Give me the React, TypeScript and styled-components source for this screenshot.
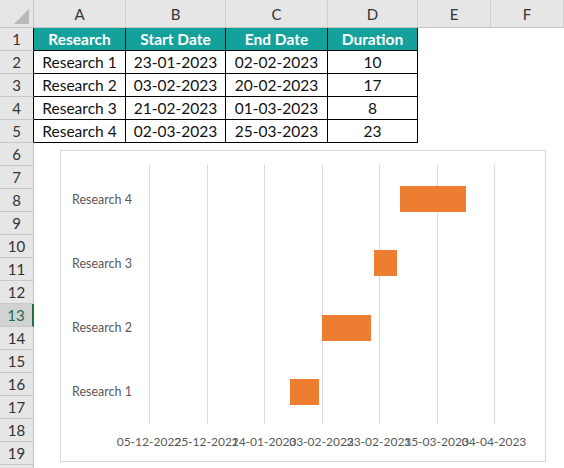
import styled, { createGlobalStyle } from "styled-components";

const GlobalStyle = createGlobalStyle`
  html, body {
    margin: 0;
    padding: 0;
    background: #ffffff;
  }
  body {
    font-family: Lato, "Liberation Sans", sans-serif;
    overflow: hidden;
  }
  * {
    box-sizing: border-box;
  }
`;

const COLUMNS = [
  { name: "A", width: 92 },
  { name: "B", width: 100 },
  { name: "C", width: 102 },
  { name: "D", width: 90 },
  { name: "E", width: 73 },
  { name: "F", width: 73 },
];

const HEADERS = ["Research", "Start Date", "End Date", "Duration"];

const TASKS = [
  { name: "Research 1", start: "23-01-2023", end: "02-02-2023", duration: 10 },
  { name: "Research 2", start: "03-02-2023", end: "20-02-2023", duration: 17 },
  { name: "Research 3", start: "21-02-2023", end: "01-03-2023", duration: 8 },
  { name: "Research 4", start: "02-03-2023", end: "25-03-2023", duration: 23 },
];

const ROW_COUNT = 20;
const SELECTED_ROW = 13;
const TABLE_ROWS = 5;

// chart scale
const AXIS_START = "05-12-2022";
const TICK_DAYS = 20;
const TICK_COUNT = 7;
const TICK_WIDTH = 57.5;
const PX_PER_DAY = TICK_WIDTH / TICK_DAYS;
const PLOT_HEIGHT = 259;
const BAND_TOP = 2;
const BAR_HEIGHT = 26;
const DAY_MS = 86400000;

const parseDate = (s: string) => {
  const [d, m, y] = s.split("-").map(Number);
  return Date.UTC(y, m - 1, d);
};

const formatDate = (t: number) => {
  const date = new Date(t);
  const dd = String(date.getUTCDate()).padStart(2, "0");
  const mm = String(date.getUTCMonth() + 1).padStart(2, "0");
  return `${dd}-${mm}-${date.getUTCFullYear()}`;
};

const Sheet = styled.div`
  width: 564px;
  height: 468px;
  overflow: hidden;
  background: #ffffff;
`;

const ColumnBar = styled.div`
  display: flex;
  height: 28px;
  background: #e6e6e6;
  border-bottom: 1px solid #c4c4c4;
`;

const Corner = styled.div`
  width: 34px;
  flex: none;
  display: flex;
  align-items: flex-end;
  justify-content: flex-end;
  padding: 0 4px 3px 0;
  border-right: 1px solid #c4c4c4;
`;

const CornerMark = styled.div`
  width: 15px;
  height: 15px;
  background: #b8b8b8;
  clip-path: polygon(100% 0, 100% 100%, 0 100%);
`;

const ColHead = styled.div<{ $w: number }>`
  width: ${(p) => p.$w}px;
  flex: none;
  display: flex;
  align-items: center;
  justify-content: center;
  font-size: 15px;
  color: #333333;
  border-right: 1px solid #d0d0d0;
`;

const Body = styled.div`
  display: flex;
`;

const RowHeads = styled.div`
  width: 34px;
  flex: none;
  display: flex;
  flex-direction: column;
`;

const RowHead = styled.div<{ $selected?: boolean; $edge: string }>`
  height: 23px;
  flex: none;
  display: flex;
  align-items: center;
  justify-content: center;
  font-size: 15px;
  color: ${(p) => (p.$selected ? "#1f6e43" : "#333333")};
  background: ${(p) => (p.$selected ? "#d2d2d2" : "#e6e6e6")};
  border-bottom: 1px solid #c8c8c8;
  border-right: ${(p) => (p.$selected ? "2px solid #217346" : `1px solid ${p.$edge}`)};
`;

const Cells = styled.div`
  flex: 1;
  display: flex;
  flex-direction: column;
`;

const Table = styled.div`
  display: grid;
  grid-template-columns: 92px 100px 102px 90px;
  grid-auto-rows: 23px;
`;

const Cell = styled.div<{ $head?: boolean }>`
  display: flex;
  align-items: center;
  justify-content: center;
  font-size: 15.5px;
  font-weight: ${(p) => (p.$head ? 700 : 400)};
  color: ${(p) => (p.$head ? "#ffffff" : "#111111")};
  background: ${(p) => (p.$head ? "#14a19b" : "#ffffff")};
  border-right: 1px solid #000000;
  border-bottom: 1px solid #000000;
  white-space: nowrap;
`;

const Chart = styled.div`
  width: 486px;
  height: 312px;
  margin: 7px 0 0 26px;
  border: 1px solid #d9d9d9;
  background: #ffffff;
  padding-top: 14px;
  display: flex;
  flex-direction: column;
`;

const PlotRow = styled.div`
  display: flex;
`;

const Categories = styled.div`
  width: 88px;
  flex: none;
  display: grid;
  grid-template-rows: repeat(4, 1fr);
  height: ${PLOT_HEIGHT}px;
  padding-top: ${BAND_TOP}px;
`;

const Category = styled.div`
  display: flex;
  align-items: center;
  padding-left: 11px;
  font-size: 12.5px;
  color: #595959;
  white-space: nowrap;
`;

const Axis = styled.div`
  display: flex;
  padding: 10px 0 0 59.25px;
`;

const Tick = styled.div`
  width: ${TICK_WIDTH}px;
  flex: none;
  display: flex;
  justify-content: center;
  font-size: 12px;
  line-height: 16px;
  color: #595959;
  white-space: nowrap;
`;

const GanttPlot = () => {
  const origin = parseDate(AXIS_START);
  const rowH = (PLOT_HEIGHT - BAND_TOP) / TASKS.length;
  const ordered = [...TASKS].reverse();
  const width = TICK_WIDTH * (TICK_COUNT - 1) + 1;

  return (
    <svg width={width} height={PLOT_HEIGHT} shapeRendering="crispEdges">
      {Array.from({ length: TICK_COUNT }, (_, i) => (
        <line
          key={i}
          x1={Math.round(i * TICK_WIDTH) + 0.5}
          x2={Math.round(i * TICK_WIDTH) + 0.5}
          y1={0}
          y2={PLOT_HEIGHT}
          stroke="#d9d9d9"
        />
      ))}
      {ordered.map((t, i) => {
        const days = (parseDate(t.start) - origin) / DAY_MS;
        return (
          <rect
            key={t.name}
            x={Math.ceil(days * PX_PER_DAY)}
            y={Math.round(BAND_TOP + rowH * i + rowH / 2 - BAR_HEIGHT / 2)}
            width={Math.round(t.duration * PX_PER_DAY)}
            height={BAR_HEIGHT}
            fill="#ed7d31"
          />
        );
      })}
    </svg>
  );
};

const App = () => {
  const origin = parseDate(AXIS_START);

  return (
    <Sheet>
      <GlobalStyle />
      <ColumnBar>
        <Corner>
          <CornerMark />
        </Corner>
        {COLUMNS.map((c) => (
          <ColHead key={c.name} $w={c.width}>
            {c.name}
          </ColHead>
        ))}
      </ColumnBar>
      <Body>
        <RowHeads>
          {Array.from({ length: ROW_COUNT }, (_, i) => (
            <RowHead
              key={i}
              $selected={i + 1 === SELECTED_ROW}
              $edge={i < TABLE_ROWS ? "#000000" : "#c4c4c4"}
            >
              {i + 1}
            </RowHead>
          ))}
        </RowHeads>
        <Cells>
          <Table>
            {HEADERS.map((h) => (
              <Cell key={h} $head>
                {h}
              </Cell>
            ))}
            {TASKS.map((t) => [
              <Cell key={t.name}>{t.name}</Cell>,
              <Cell key={t.name + "s"}>{t.start}</Cell>,
              <Cell key={t.name + "e"}>{t.end}</Cell>,
              <Cell key={t.name + "d"}>{t.duration}</Cell>,
            ])}
          </Table>
          <Chart>
            <PlotRow>
              <Categories>
                {[...TASKS].reverse().map((t) => (
                  <Category key={t.name}>{t.name}</Category>
                ))}
              </Categories>
              <GanttPlot />
            </PlotRow>
            <Axis>
              {Array.from({ length: TICK_COUNT }, (_, i) => (
                <Tick key={i}>{formatDate(origin + i * TICK_DAYS * DAY_MS)}</Tick>
              ))}
            </Axis>
          </Chart>
        </Cells>
      </Body>
    </Sheet>
  );
};

export default App;
